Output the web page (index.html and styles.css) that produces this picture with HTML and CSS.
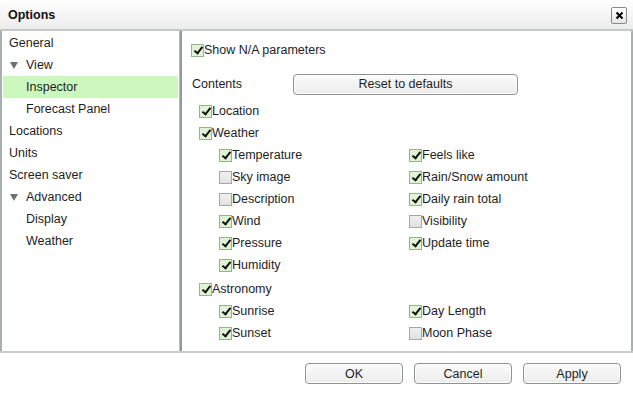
FILE: index.html
```html
<!DOCTYPE html>
<html>
<head>
<meta charset="utf-8">
<link rel="stylesheet" href="styles.css">
</head>
<body>
<div class="window">
  <div class="titlebar">
    <span class="title">Options</span>
    <span class="close"><svg width="9" height="9" viewBox="0 0 9 9"><path d="M1.5 1.5L7.5 7.5M7.5 1.5L1.5 7.5" stroke="#000" stroke-width="2"/></svg></span>
  </div>
  <div class="main">
    <div class="tree">
      <div class="node">General</div>
      <div class="node"><span class="tri"><svg width="8" height="7" viewBox="0 0 8 7"><path d="M0 0H8L4 7Z" fill="#6f6f6f"/></svg></span>View</div>
      <div class="node sub sel">Inspector</div>
      <div class="node sub">Forecast Panel</div>
      <div class="node">Locations</div>
      <div class="node">Units</div>
      <div class="node">Screen saver</div>
      <div class="node"><span class="tri"><svg width="8" height="7" viewBox="0 0 8 7"><path d="M0 0H8L4 7Z" fill="#6f6f6f"/></svg></span>Advanced</div>
      <div class="node sub">Display</div>
      <div class="node sub">Weather</div>
    </div>
    <div class="splitter"></div>
    <div class="content">
      <label class="cb top"><span class="box on"></span>Show N/A parameters</label>
      <div class="contents-row">
        <span class="lbl">Contents</span>
        <span class="btn reset">Reset to defaults</span>
      </div>
      <label class="cb l1"><span class="box on"></span>Location</label>
      <label class="cb l1"><span class="box on"></span>Weather</label>
      <div class="grid">
        <label class="cb"><span class="box on"></span>Temperature</label>
        <label class="cb"><span class="box on"></span>Feels like</label>
        <label class="cb"><span class="box"></span>Sky image</label>
        <label class="cb"><span class="box on"></span>Rain/Snow amount</label>
        <label class="cb"><span class="box"></span>Description</label>
        <label class="cb"><span class="box on"></span>Daily rain total</label>
        <label class="cb"><span class="box on"></span>Wind</label>
        <label class="cb"><span class="box"></span>Visibility</label>
        <label class="cb"><span class="box on"></span>Pressure</label>
        <label class="cb"><span class="box on"></span>Update time</label>
        <label class="cb"><span class="box on"></span>Humidity</label>
        <span></span>
      </div>
      <label class="cb l1 astro"><span class="box on"></span>Astronomy</label>
      <div class="grid">
        <label class="cb"><span class="box on"></span>Sunrise</label>
        <label class="cb"><span class="box on"></span>Day Length</label>
        <label class="cb"><span class="box on"></span>Sunset</label>
        <label class="cb"><span class="box"></span>Moon Phase</label>
      </div>
    </div>
  </div>
  <div class="footer">
    <span class="btn">OK</span>
    <span class="btn">Cancel</span>
    <span class="btn">Apply</span>
  </div>
</div>
</body>
</html>
```
FILE: styles.css
```css
* { box-sizing: border-box; }
html, body { margin: 0; padding: 0; }
body {
  font-family: "Liberation Sans", Arial, sans-serif;
  font-size: 12.5px;
  color: #1e1e1e;
  background: #fff;
}
.window {
  width: 633px;
  height: 396px;
  display: flex;
  flex-direction: column;
  background: #fff;
}
.titlebar {
  height: 31px;
  flex: none;
  display: flex;
  align-items: center;
  justify-content: space-between;
  padding: 1px 6px 0 8px;
  background: linear-gradient(#ffffff, #ececec);
  border-bottom: 2px solid #c4c8c8;
}
.title {
  font-weight: bold;
  font-size: 12.5px;
  color: #111;
}
.close {
  width: 16px;
  height: 17px;
  display: flex;
  align-items: center;
  justify-content: center;
  border: 1px solid #8a8a8a;
  border-radius: 2px;
  background: linear-gradient(#ffffff, #e6e6e6);
}
.main {
  height: 322px;
  flex: none;
  display: flex;
  border-bottom: 2px solid #c9cccc;
}
.tree {
  width: 179px;
  border-left: 2px solid #a9b1b0;
  padding: 1px 1px 0 1px;
  display: flex;
  flex-direction: column;
}
.node {
  height: 22px;
  display: flex;
  align-items: center;
  padding-left: 6px;
  color: #1e1e1e;
}
.node.sub { padding-left: 23px; }
.node.sel { background: #ccf8c0; }
.tri {
  width: 17px;
  display: inline-flex;
  align-items: center;
  padding-left: 1px;
}
.splitter {
  width: 3px;
  background: #8f9a98;
  border-left: 1px solid #b8bebd;
}
.content {
  flex: 1;
  border-right: 2px solid #a9b1b0;
  padding: 10px 0 0 9px;
  display: flex;
  flex-direction: column;
}
.cb {
  height: 22px;
  display: flex;
  align-items: center;
  white-space: nowrap;
}
.box {
  width: 13px;
  height: 13px;
  flex: none;
  border: 1px solid #a4a8a6;
  background: linear-gradient(#f0f0f0, #e2e2e2);
  position: relative;
}
.box.on {
  border-color: #8fb886;
  background: #e0f3d6;
}
.box.on::after {
  content: "";
  position: absolute;
  left: 3.5px;
  top: 0px;
  width: 3px;
  height: 7px;
  border-right: 2.2px solid #111;
  border-bottom: 2.2px solid #111;
  transform: rotate(38deg);
}
.cb.top { height: 16px; margin-top: 1px; }
.contents-row {
  display: flex;
  align-items: center;
  margin-top: 15px;
  height: 22px;
  padding-left: 1px;
}
.lbl { width: 101px; }
.btn {
  display: flex;
  align-items: center;
  justify-content: center;
  height: 21px;
  border: 1px solid #8e9292;
  border-radius: 4px;
  background: linear-gradient(#fbfbfb, #ececec);
  box-shadow: inset 0 0 0 1px #fff;
  color: #1e1e1e;
}
.reset { width: 225px; }
.l1 { margin-left: 8px; }
.contents-row + .l1 { margin-top: 5px; }
.grid {
  display: grid;
  grid-template-columns: 190px 1fr;
  padding-left: 28px;
}
.astro { margin-top: 2px; }
.footer {
  flex: 1;
  display: flex;
  justify-content: flex-end;
  align-items: flex-start;
  gap: 11px;
  padding: 10px 12px 0 0;
}
.footer .btn { width: 98px; }
```
